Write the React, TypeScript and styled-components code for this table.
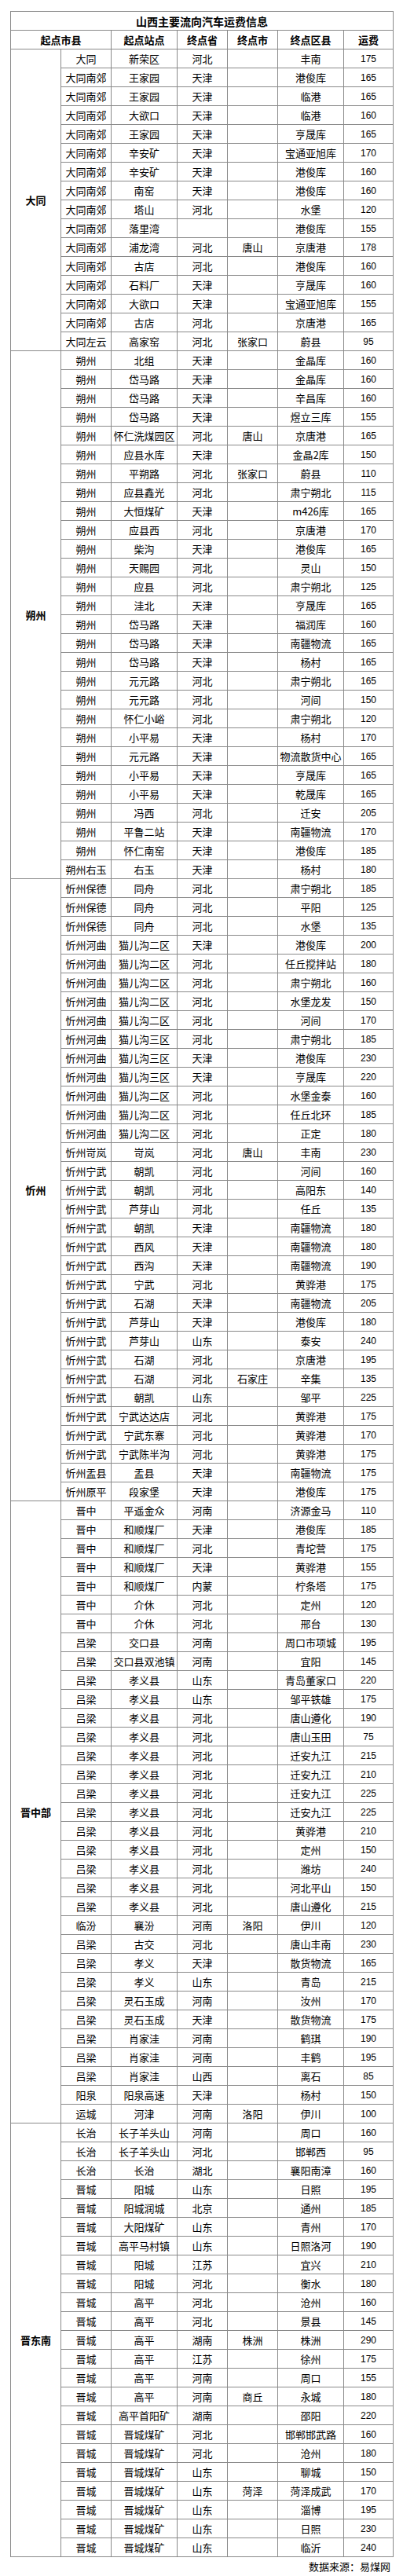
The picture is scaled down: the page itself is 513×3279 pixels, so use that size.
import React from 'react';
import styled, { createGlobalStyle } from 'styled-components';

// Page-wide reset and font.
const GlobalStyle = createGlobalStyle`
  body {
    margin: 0;
    background: #ffffff;
    color: #000000;
    font-family: "Noto Sans CJK SC", "Liberation Sans", sans-serif;
  }
`;

const Page = styled.div`
  width: 487px;
  margin: 14px auto 0;
`;

const Sheet = styled.table`
  width: 487px;
  border-collapse: collapse;
  table-layout: fixed;
  border: 1px solid #8a8a8a;
`;

const Cell = styled.td`
  height: 23px;
  padding: 0;
  border: 1px solid #8a8a8a;
  text-align: center;
  vertical-align: middle;
  font-size: 13px;
  line-height: 16px;
  white-space: nowrap;
  overflow: hidden;
`;

const TitleCell = styled(Cell)`
  font-size: 14px;
  font-weight: bold;
`;

const HeadCell = styled(Cell)`
  font-weight: bold;
`;

const GroupCell = styled(Cell)`
  font-weight: bold;
`;

const FeeCell = styled(Cell)`
  font-family: "Liberation Sans", "Noto Sans CJK SC", sans-serif;
  font-size: 12px;
`;

const Source = styled.div`
  padding-right: 3px;
  text-align: right;
  font-size: 13px;
  line-height: 24px;
`;

type Route = [string, string, string, string, string, number];

interface Group {
  label: string;
  rows: Route[];
}

const groups: Group[] = [
  {
    label: '大同',
    rows: [
      ['大同', '新荣区', '河北', '', '丰南', 175],
      ['大同南郊', '王家园', '天津', '', '港俊库', 165],
      ['大同南郊', '王家园', '天津', '', '临港', 165],
      ['大同南郊', '大欲口', '天津', '', '临港', 160],
      ['大同南郊', '王家园', '天津', '', '亨晟库', 165],
      ['大同南郊', '辛安矿', '天津', '', '宝通亚旭库', 170],
      ['大同南郊', '辛安矿', '天津', '', '港俊库', 160],
      ['大同南郊', '南窑', '天津', '', '港俊库', 160],
      ['大同南郊', '塔山', '河北', '', '水堡', 120],
      ['大同南郊', '落里湾', '', '', '港俊库', 155],
      ['大同南郊', '浦龙湾', '河北', '唐山', '京唐港', 178],
      ['大同南郊', '古店', '河北', '', '港俊库', 160],
      ['大同南郊', '石料厂', '天津', '', '亨晟库', 160],
      ['大同南郊', '大欲口', '天津', '', '宝通亚旭库', 155],
      ['大同南郊', '古店', '河北', '', '京唐港', 165],
      ['大同左云', '高家窑', '河北', '张家口', '蔚县', 95],
    ],
  },
  {
    label: '朔州',
    rows: [
      ['朔州', '北组', '天津', '', '金晶库', 160],
      ['朔州', '岱马路', '天津', '', '金晶库', 160],
      ['朔州', '岱马路', '天津', '', '辛昌库', 160],
      ['朔州', '岱马路', '天津', '', '煜立三库', 155],
      ['朔州', '怀仁洗煤园区', '河北', '唐山', '京唐港', 165],
      ['朔州', '应县水库', '天津', '', '金晶2库', 150],
      ['朔州', '平朔路', '河北', '张家口', '蔚县', 110],
      ['朔州', '应县鑫光', '河北', '', '肃宁朔北', 115],
      ['朔州', '大恒煤矿', '天津', '', 'm426库', 165],
      ['朔州', '应县西', '河北', '', '京唐港', 170],
      ['朔州', '柴沟', '天津', '', '港俊库', 165],
      ['朔州', '天赐园', '河北', '', '灵山', 150],
      ['朔州', '应县', '河北', '', '肃宁朔北', 125],
      ['朔州', '洼北', '天津', '', '亨晟库', 165],
      ['朔州', '岱马路', '天津', '', '福润库', 160],
      ['朔州', '岱马路', '天津', '', '南疆物流', 165],
      ['朔州', '岱马路', '天津', '', '杨村', 165],
      ['朔州', '元元路', '河北', '', '肃宁朔北', 165],
      ['朔州', '元元路', '河北', '', '河间', 150],
      ['朔州', '怀仁小峪', '河北', '', '肃宁朔北', 120],
      ['朔州', '小平易', '天津', '', '杨村', 170],
      ['朔州', '元元路', '天津', '', '物流散货中心', 165],
      ['朔州', '小平易', '天津', '', '亨晟库', 165],
      ['朔州', '小平易', '天津', '', '乾晟库', 165],
      ['朔州', '冯西', '河北', '', '迁安', 205],
      ['朔州', '平鲁二站', '天津', '', '南疆物流', 170],
      ['朔州', '怀仁南窑', '天津', '', '港俊库', 185],
      ['朔州右玉', '右玉', '天津', '', '杨村', 180],
    ],
  },
  {
    label: '忻州',
    rows: [
      ['忻州保德', '同舟', '河北', '', '肃宁朔北', 185],
      ['忻州保德', '同舟', '河北', '', '平阳', 125],
      ['忻州保德', '同舟', '河北', '', '水堡', 135],
      ['忻州河曲', '猫儿沟二区', '天津', '', '港俊库', 200],
      ['忻州河曲', '猫儿沟二区', '河北', '', '任丘搅拌站', 180],
      ['忻州河曲', '猫儿沟二区', '河北', '', '肃宁朔北', 160],
      ['忻州河曲', '猫儿沟二区', '河北', '', '水堡龙发', 150],
      ['忻州河曲', '猫儿沟二区', '河北', '', '河间', 170],
      ['忻州河曲', '猫儿沟三区', '河北', '', '肃宁朔北', 185],
      ['忻州河曲', '猫儿沟三区', '天津', '', '港俊库', 230],
      ['忻州河曲', '猫儿沟三区', '天津', '', '亨晟库', 220],
      ['忻州河曲', '猫儿沟二区', '河北', '', '水堡金泰', 160],
      ['忻州河曲', '猫儿沟二区', '河北', '', '任丘北环', 185],
      ['忻州河曲', '猫儿沟二区', '河北', '', '正定', 180],
      ['忻州岢岚', '岢岚', '河北', '唐山', '丰南', 230],
      ['忻州宁武', '朝凯', '河北', '', '河间', 160],
      ['忻州宁武', '朝凯', '河北', '', '高阳东', 140],
      ['忻州宁武', '芦芽山', '河北', '', '任丘', 135],
      ['忻州宁武', '朝凯', '天津', '', '南疆物流', 180],
      ['忻州宁武', '西风', '天津', '', '南疆物流', 180],
      ['忻州宁武', '西沟', '天津', '', '南疆物流', 190],
      ['忻州宁武', '宁武', '河北', '', '黄骅港', 175],
      ['忻州宁武', '石湖', '天津', '', '南疆物流', 205],
      ['忻州宁武', '芦芽山', '天津', '', '港俊库', 180],
      ['忻州宁武', '芦芽山', '山东', '', '泰安', 240],
      ['忻州宁武', '石湖', '河北', '', '京唐港', 195],
      ['忻州宁武', '石湖', '河北', '石家庄', '辛集', 135],
      ['忻州宁武', '朝凯', '山东', '', '邹平', 225],
      ['忻州宁武', '宁武达达店', '河北', '', '黄骅港', 175],
      ['忻州宁武', '宁武东寨', '河北', '', '黄骅港', 170],
      ['忻州宁武', '宁武陈半沟', '河北', '', '黄骅港', 175],
      ['忻州盂县', '盂县', '天津', '', '南疆物流', 175],
      ['忻州原平', '段家堡', '天津', '', '港俊库', 175],
    ],
  },
  {
    label: '晋中部',
    rows: [
      ['晋中', '平遥金众', '河南', '', '济源金马', 110],
      ['晋中', '和顺煤厂', '天津', '', '港俊库', 185],
      ['晋中', '和顺煤厂', '河北', '', '青坨营', 175],
      ['晋中', '和顺煤厂', '天津', '', '黄骅港', 155],
      ['晋中', '和顺煤厂', '内蒙', '', '柠条塔', 175],
      ['晋中', '介休', '河北', '', '定州', 120],
      ['晋中', '介休', '河北', '', '邢台', 130],
      ['吕梁', '交口县', '河南', '', '周口市项城', 195],
      ['吕梁', '交口县双池镇', '河南', '', '宜阳', 145],
      ['吕梁', '孝义县', '山东', '', '青岛董家口', 220],
      ['吕梁', '孝义县', '山东', '', '邹平铁雄', 175],
      ['吕梁', '孝义县', '河北', '', '唐山遵化', 190],
      ['吕梁', '孝义县', '河北', '', '唐山玉田', 75],
      ['吕梁', '孝义县', '河北', '', '迁安九江', 215],
      ['吕梁', '孝义县', '河北', '', '迁安九江', 210],
      ['吕梁', '孝义县', '河北', '', '迁安九江', 225],
      ['吕梁', '孝义县', '河北', '', '迁安九江', 225],
      ['吕梁', '孝义县', '河北', '', '黄骅港', 210],
      ['吕梁', '孝义县', '河北', '', '定州', 150],
      ['吕梁', '孝义县', '河北', '', '潍坊', 240],
      ['吕梁', '孝义县', '河北', '', '河北平山', 150],
      ['吕梁', '孝义县', '河北', '', '唐山遵化', 215],
      ['临汾', '襄汾', '河南', '洛阳', '伊川', 120],
      ['吕梁', '古交', '河北', '', '唐山丰南', 230],
      ['吕梁', '孝义', '天津', '', '散货物流', 165],
      ['吕梁', '孝义', '山东', '', '青岛', 215],
      ['吕梁', '灵石玉成', '河南', '', '汝州', 170],
      ['吕梁', '灵石玉成', '天津', '', '散货物流', 175],
      ['吕梁', '肖家洼', '河南', '', '鹤琪', 190],
      ['吕梁', '肖家洼', '河南', '', '丰鹤', 195],
      ['吕梁', '肖家洼', '山西', '', '离石', 85],
      ['阳泉', '阳泉高速', '天津', '', '杨村', 150],
      ['运城', '河津', '河南', '洛阳', '伊川', 100],
    ],
  },
  {
    label: '晋东南',
    rows: [
      ['长治', '长子羊头山', '河南', '', '周口', 160],
      ['长治', '长子羊头山', '河北', '', '邯郸西', 95],
      ['长治', '长治', '湖北', '', '襄阳南漳', 160],
      ['晋城', '阳城', '山东', '', '日照', 195],
      ['晋城', '阳城润城', '北京', '', '通州', 185],
      ['晋城', '大阳煤矿', '山东', '', '青州', 170],
      ['晋城', '高平马村镇', '山东', '', '日照洛河', 190],
      ['晋城', '阳城', '江苏', '', '宜兴', 210],
      ['晋城', '阳城', '河北', '', '衡水', 180],
      ['晋城', '高平', '河北', '', '沧州', 160],
      ['晋城', '高平', '河北', '', '景县', 145],
      ['晋城', '高平', '湖南', '株洲', '株洲', 290],
      ['晋城', '高平', '江苏', '', '徐州', 175],
      ['晋城', '高平', '河南', '', '周口', 155],
      ['晋城', '高平', '河南', '商丘', '永城', 180],
      ['晋城', '高平首阳矿', '湖南', '', '邵阳', 220],
      ['晋城', '晋城煤矿', '河北', '', '邯郸邯武路', 160],
      ['晋城', '晋城煤矿', '河北', '', '沧州', 180],
      ['晋城', '晋城煤矿', '山东', '', '聊城', 150],
      ['晋城', '晋城煤矿', '山东', '菏泽', '菏泽成武', 170],
      ['晋城', '晋城煤矿', '山东', '', '淄博', 195],
      ['晋城', '晋城煤矿', '山东', '', '日照', 230],
      ['晋城', '晋城煤矿', '山东', '', '临沂', 240],
    ],
  },
];

const columnWidths = [64, 64, 84, 64, 64, 84, 63];

const App: React.FC = () => {
  return (
    <>
      <GlobalStyle />
      <Page>
        <Sheet>
          <colgroup>
            {columnWidths.map((w, i) => (
              <col key={i} style={{ width: w }} />
            ))}
          </colgroup>
          <tbody>
            <tr>
              <TitleCell colSpan={7}>山西主要流向汽车运费信息</TitleCell>
            </tr>
            <tr>
              <HeadCell colSpan={2}>起点市县</HeadCell>
              <HeadCell>起点站点</HeadCell>
              <HeadCell>终点省</HeadCell>
              <HeadCell>终点市</HeadCell>
              <HeadCell>终点区县</HeadCell>
              <HeadCell>运费</HeadCell>
            </tr>
            {groups.map((group) =>
              group.rows.map((row, i) => (
                <tr key={`${group.label}-${i}`}>
                  {i === 0 && <GroupCell rowSpan={group.rows.length}>{group.label}</GroupCell>}
                  <Cell>{row[0]}</Cell>
                  <Cell>{row[1]}</Cell>
                  <Cell>{row[2]}</Cell>
                  <Cell>{row[3]}</Cell>
                  <Cell>{row[4]}</Cell>
                  <FeeCell>{row[5]}</FeeCell>
                </tr>
              ))
            )}
          </tbody>
        </Sheet>
        <Source>数据来源：易煤网</Source>
      </Page>
    </>
  );
};

export default App;
